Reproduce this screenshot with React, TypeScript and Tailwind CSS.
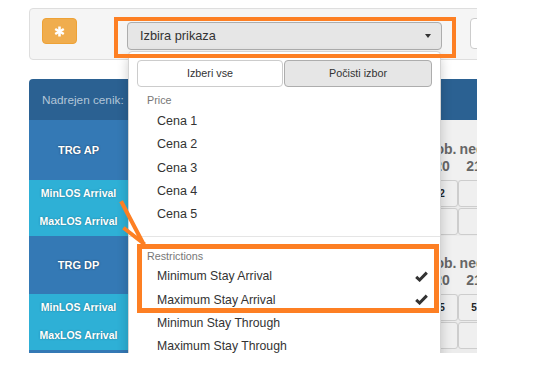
import React from "react";

type Group = { name: string; min: string[] };

const days = [
  ["", ""],
  ["", ""],
  ["", ""],
  ["", ""],
  ["", ""],
  ["", ""],
  ["", ""],
  ["", ""],
  ["", ""],
  ["sob.", "20"],
  ["ned.", "21"],
];

const groups: Group[] = [
  { name: "TRG AP", min: ["", "", "", "", "", "", "", "", "", "2", ""] },
  { name: "TRG DP", min: ["", "", "", "", "", "", "", "", "", "5", "5"] },
];

const prices = ["Cena 1", "Cena 2", "Cena 3", "Cena 4", "Cena 5"];
const restrictions = [
  { label: "Minimum Stay Arrival", checked: true },
  { label: "Maximum Stay Arrival", checked: true },
  { label: "Minimun Stay Through", checked: false },
  { label: "Maximum Stay Through", checked: false },
];

function Check() {
  return (
    <svg width="13" height="11" viewBox="0 0 13 11">
      <path d="M1.2 5.8 L4.6 9 L11.8 1.6" stroke="#333" strokeWidth="3" fill="none" />
    </svg>
  );
}

function Asterisk() {
  return (
    <svg width="11" height="11" viewBox="0 0 11 11">
      <g stroke="#fff" strokeWidth="2.6">
        <path d="M5.5 0.5 V10.5" />
        <path d="M1.2 3 L9.8 8" />
        <path d="M1.2 8 L9.8 3" />
      </g>
    </svg>
  );
}

function DayCells({ values }: { values: string[] }) {
  return (
    <div className="flex pl-[10px] h-[27px]">
      {days.map((_, i) => (
        <div
          key={i}
          className="shrink-0 w-[32px] h-full border border-[#cdcdcd] rounded-[3px] bg-[#efefef] flex items-center justify-center text-[10px] font-bold text-[#222]"
        >
          {values[i]}
        </div>
      ))}
    </div>
  );
}

function TableGroup({ g, head }: { g: Group; head: number }) {
  return (
    <div className="flex flex-col">
      <div className="flex" style={{ height: head }}>
        <div className="shrink-0 w-[99px] bg-[#3479b5] flex items-center justify-center text-white font-bold text-[11px] [text-shadow:0_0_2px_rgba(0,0,0,0.55)]">
          {g.name}
        </div>
        <div className="flex-1 flex items-end pl-[10px] pb-[5px] bg-[#f0f0f0]">
          {days.map((d, i) => (
            <div key={i} className="shrink-0 w-[32px] flex flex-col items-center leading-[17px] text-[14px] font-bold text-[#666]">
              <span>{d[0]}</span>
              <span>{d[1]}</span>
            </div>
          ))}
        </div>
      </div>
      {["MinLOS Arrival", "MaxLOS Arrival"].map((l, i) => (
        <div key={l} className="flex h-[28px]">
          <div className="shrink-0 w-[99px] bg-[#2eb0d6] flex items-center justify-center text-white font-bold text-[10.5px] [text-shadow:0_0_2px_rgba(0,0,0,0.35)]">
            {l}
          </div>
          <div className="flex-1 bg-[#ebebeb]">
            <DayCells values={i === 0 ? g.min : []} />
          </div>
        </div>
      ))}
    </div>
  );
}

export default function App() {
  return (
    <div className="w-[554px] h-[374px] bg-white font-['Liberation_Sans',Arial,sans-serif] text-[#333]">
      <div className="relative w-[477px] h-[353px] overflow-hidden">
        {/* toolbar */}
        <div className="ml-[29px] mt-[8px] h-[52px] w-[470px] border border-[#dedede] bg-[#f5f5f5] rounded-[4px] flex items-start">
          <div className="shrink-0 ml-[12px] mt-[9px] w-[35px] h-[26px] rounded-[4px] bg-[#f0ad4e] border border-[#eea236] flex items-center justify-center">
            <Asterisk />
          </div>
          <div className="shrink-0 ml-[50px] mt-[13px] w-[315px] h-[28px] rounded-[4px] bg-[#e6e6e6] border border-[#adadad] flex items-center justify-between pl-[12px] pr-[10px] text-[12.75px]">
            <span>Izbira prikaza</span>
            <span className="w-0 h-0 border-l-[3.5px] border-r-[3.5px] border-t-[4px] border-l-transparent border-r-transparent border-t-[#333]" />
          </div>
          <div className="shrink-0 ml-[28px] mt-[9px] w-[60px] h-[31px] rounded-[4px] bg-white border border-[#ccc]" />
        </div>

        {/* table */}
        <div className="ml-[29px] mt-[19px] w-[460px] flex flex-col">
          <div className="h-[41px] bg-[#2b6192] rounded-tl-[4px] flex items-center pl-[13px] text-[11.75px] text-[#b3c6d8]">
            Nadrejen cenik:
          </div>
          <TableGroup g={groups[0]} head={60} />
          <TableGroup g={groups[1]} head={58} />
          <div className="flex h-[10px]">
            <div className="shrink-0 w-[99px] bg-[#3479b5]" />
            <div className="flex-1 bg-[#ececec]" />
          </div>
        </div>

        {/* dropdown menu */}
        <div className="absolute left-[128px] top-[51px] w-[313px] h-[320px] bg-white border border-[#d4d4d4] rounded-[4px] shadow-[0_6px_12px_rgba(0,0,0,0.2)]">
          <div className="flex pt-[8px] pl-[8px] gap-[1px]">
            <div className="w-[146px] h-[27px] bg-white border border-[#ccc] rounded-[4px] flex items-center justify-center text-[10.75px]">
              Izberi vse
            </div>
            <div className="w-[148px] h-[27px] bg-[#e6e6e6] border border-[#adadad] rounded-[4px] flex items-center justify-center text-[10.75px]">
              Počisti izbor
            </div>
          </div>
          <div className="mt-[3px] h-[20px] pl-[18px] flex items-center text-[10.75px] text-[#777]">Price</div>
          {prices.map((p) => (
            <div key={p} className="h-[23.2px] pl-[28px] flex items-center text-[12.5px]">
              {p}
            </div>
          ))}
          <div className="my-[10px] h-px bg-[#e5e5e5]" />
          <div className="h-[18px] pl-[18px] flex items-center text-[10.75px] text-[#777]">Restrictions</div>
          {restrictions.map((r) => (
            <div key={r.label} className="h-[23.2px] pl-[28px] pr-[12px] flex items-center justify-between text-[12.25px]">
              <span>{r.label}</span>
              {r.checked && <Check />}
            </div>
          ))}
        </div>

        {/* annotations */}
        <div className="absolute left-[114px] top-[17px] w-[342px] h-[41px] border-[4px] border-[#fd7f23]" />
        <div className="absolute left-[137px] top-[244px] w-[302px] h-[69px] border-[5px] border-[#fd7f23]" />
        <svg className="absolute left-0 top-0" width="477" height="353">
          <path d="M122 203 L143 243 M125 229 L143 243" stroke="#fd7f23" strokeWidth="4" strokeLinecap="square" fill="none" />
        </svg>
      </div>
    </div>
  );
}
